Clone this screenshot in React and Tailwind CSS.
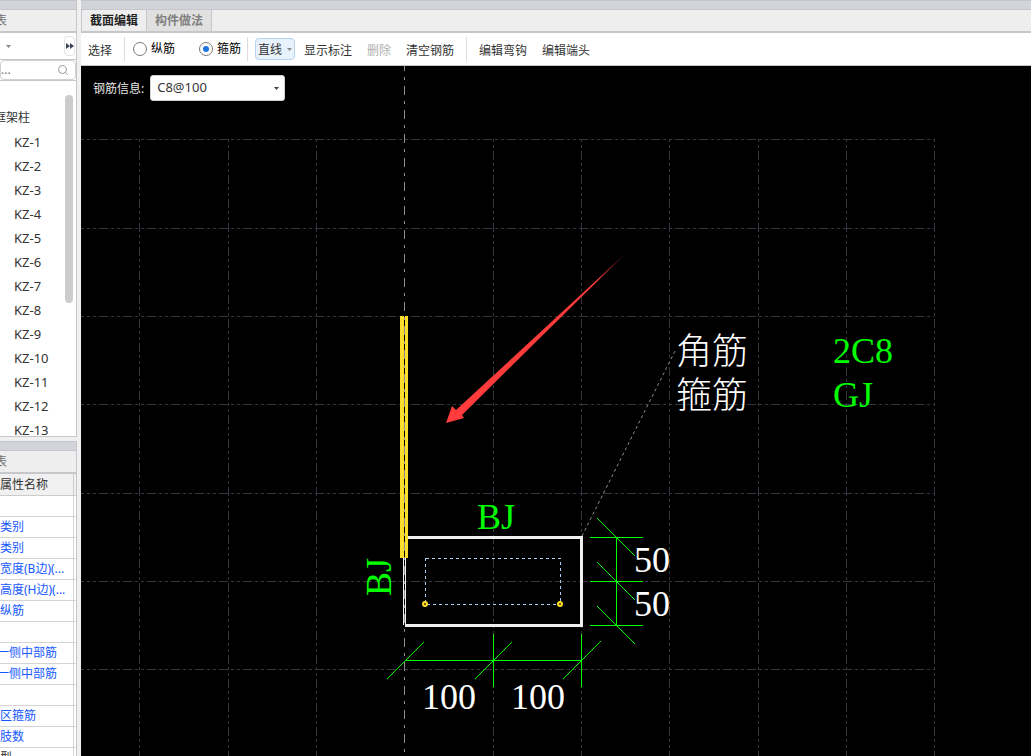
import React, { useState } from 'react';
import { Search } from 'lucide-react';

const COLUMNS = Array.from({ length: 13 }, (_, i) => `KZ-${i + 1}`);

const PROPERTIES = [
    { name: '' },
    { name: '类别' },
    { name: '类别' },
    { name: '宽度(B边)(...' },
    { name: '高度(H边)(...' },
    { name: '纵筋' },
    { name: '' },
    { name: '一侧中部筋', clipped: true },
    { name: '一侧中部筋', clipped: true },
    { name: '' },
    { name: '区箍筋' },
    { name: '肢数' },
    { name: '型', plain: true },
];

const GRID_X = [58.5, 147.5, 235.5, 412.5, 500.5, 588.5, 677.5, 765.5, 853.5];
const GRID_Y = [73.5, 162.5, 250.5, 338.5, 427.5, 515.5, 603.5];

const Caret = ({ className }) => (
    <svg viewBox="0 0 5 3" className={`h-[3px] w-[5px] ${className}`} aria-hidden="true">
        <path d="M0 0h5L2.5 3z" fill="currentColor" />
    </svg>
);

const PanelStrip = () => <div className="h-[10px] shrink-0 border-y border-[#c4c6cc] bg-[#d3d4da]" />;

const Separator = () => <span className="h-6 w-px bg-[#dcdcdc]" />;

const BarTypeRadio = ({ label, value, current, onChange }) => (
    <label className="flex items-center gap-1 text-black">
        <input
            type="radio"
            name="barType"
            value={value}
            checked={current === value}
            onChange={() => onChange(value)}
            className="grid size-[14px] appearance-none place-content-center rounded-full border border-[#7a7a7a] bg-white before:size-[6px] before:rounded-full checked:before:bg-[#1f75e0]"
        />
        {label}
    </label>
);

const ComponentList = () => (
    <section className="flex min-h-0 flex-[437] flex-col overflow-hidden border-r border-b border-[#c6c7cb] bg-white">
        <PanelStrip />
        <div className="flex h-[23px] shrink-0 items-center border-b-2 border-[#c6c7cb] bg-[#eeeeee]">
            <span className="-ml-[5px] text-[#707070]">表</span>
        </div>
        <div className="flex h-[27px] shrink-0 items-center justify-between border-b border-[#c6c7cb] pl-[6px]">
            <button type="button" aria-label="更多">
                <Caret className="text-[#888888]" />
            </button>
            <button type="button" aria-label="展开" className="mr-px flex h-5 w-[11px] items-center justify-center rounded border border-[#e4e4e8]">
                <svg viewBox="0 0 8 6" className="h-[6px] w-2 shrink-0">
                    <path d="M0 0l4 3-4 3zM4 0l4 3-4 3z" fill="#3d4258" />
                </svg>
            </button>
        </div>
        <div className="flex h-5 shrink-0 items-center justify-between rounded border border-[#d0d1d5] pr-[6px]">
            <input type="text" aria-label="搜索" placeholder="..." className="w-10 outline-none placeholder:text-[#777777]" />
            <Search size={12} color="#999999" />
        </div>
        <div className="flex min-h-0 flex-1 justify-between border-t border-[#c6c7cb]">
            <ul className="pt-[25px] leading-6 text-[#333333]">
                <li className="-ml-[6px]">框架柱</li>
                {COLUMNS.map((name) => (
                    <li key={name} className="pl-[14px] text-[13px] leading-6">{name}</li>
                ))}
            </ul>
            <div className="mt-[14px] mr-[3px] h-[208px] w-2 rounded bg-[#cccccc]" />
        </div>
    </section>
);

const PropertyList = () => (
    <section className="min-h-0 flex-[315] overflow-hidden border-r border-[#c6c7cb] bg-white">
        <PanelStrip />
        <div className="flex h-[23px] items-center border-b-2 border-[#c6c7cb] bg-[#eeeeee]">
            <span className="-ml-[5px] text-[#707070]">表</span>
        </div>
        <table className="w-full table-fixed border-collapse">
            <thead>
                <tr className="h-[21px] border-b border-[#cccccc] bg-[#f0f0f0] text-[#333333]">
                    <th className="w-[73px] overflow-hidden border-r border-[#cccccc] p-0 text-left font-normal whitespace-nowrap">
                        属性名称
                    </th>
                    <th className="p-0" />
                </tr>
            </thead>
            <tbody>
                {PROPERTIES.map((prop, idx) => (
                    <tr key={idx} className="h-[21px] border-b border-[#d4d4d4]">
                        <td
                            className={`overflow-hidden border-r border-[#d4d4d4] p-0 whitespace-nowrap ${
                                prop.plain ? 'text-[#333333]' : 'text-[#1558ff]'
                            }`}
                        >
                            <span className={prop.clipped ? '-ml-[3px]' : ''}>{prop.name}</span>
                        </td>
                        <td className="p-0" />
                    </tr>
                ))}
            </tbody>
        </table>
    </section>
);

const Toolbar = () => {
    const [barType, setBarType] = useState('stirrup');

    return (
        <div className="flex h-[33px] shrink-0 items-center border-b border-[#c6c7cb] bg-white pl-[7px] whitespace-nowrap text-[#333333]">
            <button type="button" className="mr-3 pt-[3px]">选择</button>
            <Separator />
            <div className="mr-[6px] ml-2 flex gap-6">
                <BarTypeRadio label="纵筋" value="longitudinal" current={barType} onChange={setBarType} />
                <BarTypeRadio label="箍筋" value="stirrup" current={barType} onChange={setBarType} />
            </div>
            <Separator />
            <div className="relative ml-[7px]">
                <select aria-label="绘制方式" className="block h-[22px] w-10 appearance-none rounded border border-[#b5d3f3] bg-[#e8f2fd] pt-px pl-[2px] outline-none">
                    <option>直线</option>
                </select>
                <Caret className="pointer-events-none absolute top-[10px] right-[3px] text-[#888888]" />
            </div>
            <div className="mr-3 ml-[9px] flex gap-[15px] pt-[3px]">
                <button type="button">显示标注</button>
                <button type="button" disabled className="text-[#b0b0b0]">删除</button>
                <button type="button">清空钢筋</button>
            </div>
            <Separator />
            <div className="ml-3 flex gap-[15px] pt-[3px]">
                <button type="button">编辑弯钩</button>
                <button type="button">编辑端头</button>
            </div>
        </div>
    );
};

const SectionDrawing = () => (
    <svg viewBox="0 0 950 690" preserveAspectRatio="xMinYMin slice" className="block h-full w-full">
        <defs>
            <linearGradient id="arrowFade" gradientUnits="userSpaceOnUse" x1="545" y1="187" x2="515" y2="215">
                <stop offset="0" stopColor="#ff3b3b" stopOpacity="0.4" />
                <stop offset="1" stopColor="#ff3b3b" />
            </linearGradient>
        </defs>

        {/* grid */}
        <g stroke="#31363f" strokeDasharray="9 3 3 3 3 3" shapeRendering="crispEdges">
            {GRID_Y.map((y) => (
                <line key={y} x1="0" y1={y} x2="853" y2={y} strokeDashoffset="6" />
            ))}
            {GRID_X.map((x) => (
                <line key={x} x1={x} y1="73" x2={x} y2="690" strokeDashoffset="12" />
            ))}
        </g>

        {/* column outline */}
        <g fill="#f0f0f0">
            <path d="M327 470h175v3H327zM499 470h3v90h-3zM324 558h178v3H324zM322 492h1v67h-1zM324 492h1v67h-1z" />
        </g>
        <path d="M319 250h4v242h-4zM324 250h3v242h-3z" fill="#ffde2b" />
        <line x1="323.5" y1="0" x2="323.5" y2="690" stroke="#8c8c8c" strokeDasharray="9 6 3 6" strokeDashoffset="4" shapeRendering="crispEdges" />

        {/* stirrup and corner bars */}
        <rect x="344.5" y="492.5" width="135" height="46" fill="none" stroke="#a9cdf2" strokeDasharray="3 3" shapeRendering="crispEdges" />
        <g fill="#3a3000" stroke="#ffde2b" strokeWidth="2">
            <circle cx="344" cy="538" r="2" />
            <circle cx="479" cy="538" r="2" />
        </g>

        <line x1="501" y1="470" x2="594" y2="285" stroke="#8c8c8c" strokeDasharray="3 3" />

        {/* dimensions */}
        <g stroke="#00ff00" shapeRendering="crispEdges">
            <path d="M535.5 471v89M509 471.5h53M509 515.5h53M509 559.5h53" />
            <path d="M324 594.5h177M412.5 568v53M500.5 568v53" />
            <path d="M516 452l38 38M516 496l38 38M516 540l38 38" />
            <path d="M306 613l37 -37M394 613l37 -37M482 613l38 -38" />
        </g>

        <g fontSize="36" fontFamily="'Liberation Serif', 'Noto Sans CJK SC', serif" fill="#ffffff">
            <text x="341" y="643">100</text>
            <text x="430" y="643">100</text>
            <text x="553" y="506">50</text>
            <text x="553" y="550">50</text>
            <g fontWeight="300">
                <text x="595" y="298">角筋</text>
                <text x="595" y="342">箍筋</text>
            </g>
            <g fill="#00ff00">
                <text x="396" y="463">BJ</text>
                <text transform="translate(310 530) rotate(-90)">BJ</text>
                <text x="752" y="297">2C8</text>
                <text x="752" y="341">GJ</text>
            </g>
        </g>

        {/* pointer arrow */}
        <path d="M365 357l6 -17l4 4l170 -157l-164 162l2 3z" fill="url(#arrowFade)" />
    </svg>
);

const App = () => (
    <div className="flex h-screen gap-1 overflow-hidden bg-[#f0f0f0] font-['Noto_Sans','Noto_Sans_CJK_SC',sans-serif] text-xs">
        <aside className="flex w-[77px] shrink-0 flex-col gap-1">
            <ComponentList />
            <PropertyList />
        </aside>
        <main className="flex min-w-0 flex-1 flex-col">
            <PanelStrip />
            <nav className="flex h-[23px] shrink-0 border-b-2 border-[#c6c7cb] bg-[#eeeeee] font-bold">
                <button type="button" className="border-r border-l border-[#c6c7cb] px-2 text-[#222222]">截面编辑</button>
                <button type="button" className="border-r border-[#c6c7cb] bg-[#e0e0e0] px-2 text-[#808080]">构件做法</button>
            </nav>
            <Toolbar />
            <div className="relative min-h-0 flex-1 overflow-hidden bg-black">
                <SectionDrawing />
                <div className="absolute top-[9px] left-3 flex items-center gap-[6px]">
                    <label htmlFor="barInfo" className="pt-px text-[#e6e6e6]">钢筋信息:</label>
                    <div className="relative">
                        <select id="barInfo" className="block h-[26px] w-[135px] appearance-none rounded-[3px] border border-[#d0d0d0] bg-white pl-[6px] text-[13px] text-[#333333] outline-none">
                            <option>C8@100</option>
                        </select>
                        <Caret className="pointer-events-none absolute top-3 right-[6px] text-[#444444]" />
                    </div>
                </div>
            </div>
        </main>
    </div>
);

export default App;
